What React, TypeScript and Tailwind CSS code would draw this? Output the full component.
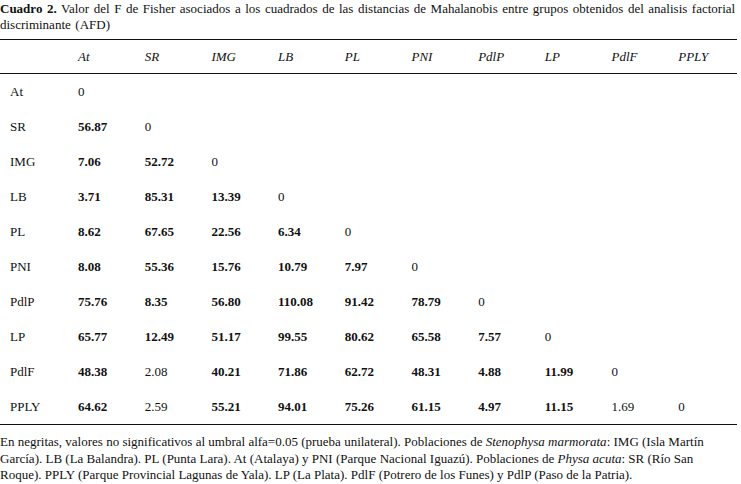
const cols = ["At", "SR", "IMG", "LB", "PL", "PNI", "PdlP", "LP", "PdlF", "PPLY"]

// "*" marks a significant (non-bold) value
const rows: string[][] = [
  ["0"],
  ["56.87", "0"],
  ["7.06", "52.72", "0"],
  ["3.71", "85.31", "13.39", "0"],
  ["8.62", "67.65", "22.56", "6.34", "0"],
  ["8.08", "55.36", "15.76", "10.79", "7.97", "0"],
  ["75.76", "8.35", "56.80", "110.08", "91.42", "78.79", "0"],
  ["65.77", "12.49", "51.17", "99.55", "80.62", "65.58", "7.57", "0"],
  ["48.38", "2.08*", "40.21", "71.86", "62.72", "48.31", "4.88", "11.99", "0"],
  ["64.62", "2.59*", "55.21", "94.01", "75.26", "61.15", "4.97", "11.15", "1.69*", "0"],
]

const grid = "grid grid-cols-[78px_repeat(9,66.7px)_1fr]"

function Cell({ value }: { value: string }) {
  const plain = value === "0" || value.endsWith("*")
  return <div className={plain ? "font-normal" : "font-bold"}>{value.replace("*", "")}</div>
}

export default function App() {
  return (
    <div className="h-[484px] w-[741px] bg-white [font-family:'Liberation_Serif','Times_New_Roman',serif] text-[13px] text-[#111]">
      <p className="w-[741px] whitespace-nowrap pt-[1px] leading-[16px] [word-spacing:1.3px]">
        <span className="font-bold">Cuadro 2.</span> Valor del F de Fisher asociados a los cuadrados de las distancias
        de Mahalanobis entre grupos obtenidos del analisis factorial
        <br />
        discriminante (AFD)
      </p>

      <div className="mt-[6px] w-[737px] border-t border-[#111]">
        <div className={`${grid} h-[34px] items-center border-b border-[#111] italic`}>
          <div />
          {cols.map((c) => (
            <div key={c}>{c}</div>
          ))}
        </div>

        {rows.map((r, i) => (
          <div key={cols[i]} className={`${grid} h-[35px] items-center`}>
            <div className="pl-[10px]">{cols[i]}</div>
            {r.map((v, j) => (
              <Cell key={j} value={v} />
            ))}
          </div>
        ))}
      </div>

      <p className="mt-0 w-[737px] border-t border-[#111] pt-[9px] leading-[16.5px]">
        En negritas, valores no significativos al umbral alfa=0.05 (prueba unilateral). Poblaciones de{" "}
        <i>Stenophysa marmorata</i>: IMG (Isla Martín
        <br />
        García). LB (La Balandra). PL (Punta Lara). At (Atalaya) y PNI (Parque Nacional Iguazú). Poblaciones de{" "}
        <i>Physa acuta</i>: SR (Río San
        <br />
        Roque). PPLY (Parque Provincial Lagunas de Yala). LP (La Plata). PdlF (Potrero de los Funes) y PdlP (Paso de la
        Patria).
      </p>
    </div>
  )
}
